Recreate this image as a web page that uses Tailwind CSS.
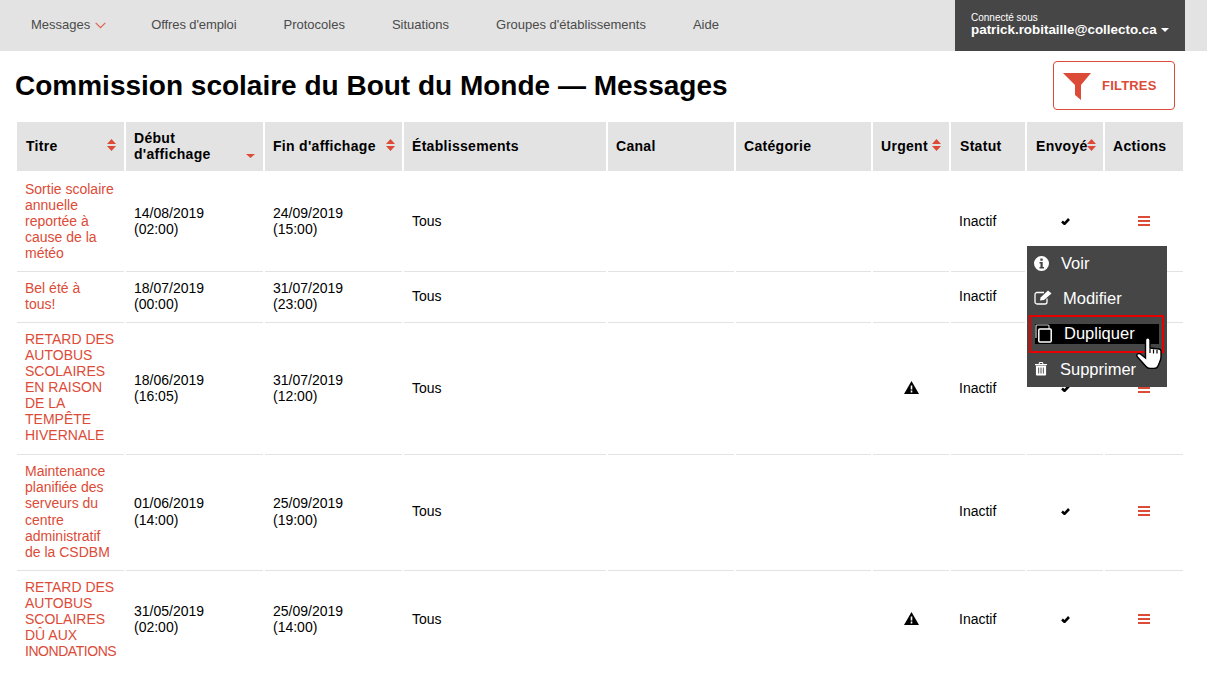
<!DOCTYPE html>
<html lang="fr">

<head>
  <meta charset="UTF-8">
  <meta name="viewport" content="width=device-width, initial-scale=1.0">
  <script src="https://cdn.jsdelivr.net/npm/@tailwindcss/browser@4"></script>
  <title>Messages</title>
</head>

<body class="relative h-[676px] overflow-hidden bg-white font-['Liberation_Sans',Arial,sans-serif] text-[14px] leading-[16.1px] text-black">
  <!-- nav -->
  <div class="flex h-[51px] items-start justify-between bg-[#e3e3e3] pl-[31px] pr-[22px]">
    <div class="flex h-[50px] items-center gap-[47px] text-[13px] text-[#4a4a4a]">
      <a href="#" class="flex items-center gap-[5px]">Messages
        <svg class="h-[7px] w-[11px]" viewBox="0 0 11 7" fill="none"><path d="M.7.9l4.800 4.800L10.300.9" stroke="#e0604f" stroke-width="1.200"/></svg>
      </a>
      <a href="#" class="ml-[-2px] tracking-[-0.1px]">Offres d'emploi</a>
      <a href="#">Protocoles</a>
      <a href="#">Situations</a>
      <a href="#">Groupes d'établissements</a>
      <a href="#">Aide</a>
    </div>
    <div class="flex h-[51px] w-[230px] flex-col justify-center pb-[1px] bg-[#464646] pl-4 text-white">
      <span class="text-[10px] leading-[9px]">Connecté sous</span>
      <span class="flex items-center gap-[4px] text-[13.400px] leading-[15px] font-bold">patrick.robitaille@collecto.ca
        <svg class="h-[4px] w-[8px]" viewBox="0 0 8 4"><path d="M0 0h8L4 4z" fill="#fff"/></svg>
      </span>
    </div>
  </div>

  <!-- title -->
  <div class="flex h-[71px] items-center justify-between pb-[2px] pl-[15px] pr-[32px]">
    <h1 class="text-[28px] leading-[32px] font-bold">Commission scolaire du Bout du Monde — Messages</h1>
    <button class="flex h-[49px] w-[122px] items-center gap-[10px] rounded-[4px] border border-[#dc4b37] pl-[9px] text-[13px] font-bold tracking-[0.2px] text-[#dc4b37]">
      <svg class="mt-[2px] h-[29px] w-[29px]" viewBox="0 0 29 29"><path d="M0 1h28L18 13v15l-6-5V13z" fill="#dc4b37"/></svg>
      <span class="mt-[2px]">FILTRES</span>
    </button>
  </div>

  <!-- table -->
  <table class="ml-[15px] w-[1170px] table-fixed border-separate border-spacing-x-[2px] border-spacing-y-0">
    <colgroup>
      <col class="w-[107px]"><col class="w-[137px]"><col class="w-[137px]"><col class="w-[202px]"><col class="w-[126px]"><col class="w-[135px]"><col class="w-[76px]"><col class="w-[74px]"><col class="w-[76px]"><col class="w-[78px]">
    </colgroup>
    <thead>
      <tr class="h-[49px] bg-[#e3e3e3] text-left text-[14px] tracking-[0.3px]">
        <th class="relative px-[9px] font-bold">Titre
          <svg class="absolute right-[8px] top-[17px] h-[12px] w-[9px]" viewBox="0 0 9 12"><path d="M4.500 0L9 5H0zM0 7h9l-4.500 5z" fill="#dc4b37"/></svg>
        </th>
        <th class="relative px-[8px] pb-[1px] font-bold">Début<br>d'affichage
          <svg class="absolute right-[8px] bottom-[13px] h-[4px] w-[9px]" viewBox="0 0 9 4"><path d="M0 0h9L4.500 4z" fill="#dc4b37"/></svg>
        </th>
        <th class="relative px-[8px] font-bold">Fin d'affichage
          <svg class="absolute right-[7px] top-[17px] h-[12px] w-[9px]" viewBox="0 0 9 12"><path d="M4.500 0L9 5H0zM0 7h9l-4.500 5z" fill="#dc4b37"/></svg>
        </th>
        <th class="px-[8px] font-bold">Établissements</th>
        <th class="px-[8px] font-bold">Canal</th>
        <th class="px-[8px] font-bold">Catégorie</th>
        <th class="relative px-[8px] font-bold">Urgent
          <svg class="absolute right-[8px] top-[17px] h-[12px] w-[9px]" viewBox="0 0 9 12"><path d="M4.500 0L9 5H0zM0 7h9l-4.500 5z" fill="#dc4b37"/></svg>
        </th>
        <th class="px-[9px] font-bold">Statut</th>
        <th class="relative px-[9px] font-bold">Envoyé
          <svg class="absolute right-[7px] top-[17px] h-[12px] w-[9px]" viewBox="0 0 9 12"><path d="M4.500 0L9 5H0zM0 7h9l-4.500 5z" fill="#dc4b37"/></svg>
        </th>
        <th class="px-[8px] font-bold">Actions</th>
      </tr>
    </thead>
    <tbody>
      <tr class="h-[101px] align-middle [&>td]:border-b [&>td]:border-[#e3e3e3] [&>td]:px-[8px]">
        <td class="text-[#dc4b37]">Sortie scolaire annuelle reportée à cause de la météo</td>
        <td>14/08/2019<br>(02:00)</td>
        <td>24/09/2019<br>(15:00)</td>
        <td>Tous</td>
        <td></td>
        <td></td>
        <td></td>
        <td>Inactif</td>
        <td><svg class="mx-auto mt-[1px] h-[7px] w-[9px]" viewBox="0 0 9 7"><path d="M1 3.500l2.500 2.300L8 1" fill="none" stroke="#000" stroke-width="2.600"/></svg></td>
        <td><svg class="mx-auto h-[10px] w-[12px]" viewBox="0 0 12 10"><path d="M0 0h12v2H0zM0 4h12v2H0zM0 8h12v2H0z" fill="#dc4b37"/></svg></td>
      </tr>
      <tr class="h-[51px] align-middle [&>td]:border-b [&>td]:border-[#e3e3e3] [&>td]:px-[8px] [&>td]:pb-[2px]">
        <td class="text-[#dc4b37]">Bel été à<br>tous!</td>
        <td>18/07/2019<br>(00:00)</td>
        <td>31/07/2019<br>(23:00)</td>
        <td>Tous</td>
        <td></td>
        <td></td>
        <td></td>
        <td>Inactif</td>
        <td><svg class="mx-auto mt-[1px] h-[7px] w-[9px]" viewBox="0 0 9 7"><path d="M1 3.500l2.500 2.300L8 1" fill="none" stroke="#000" stroke-width="2.600"/></svg></td>
        <td><svg class="mx-auto h-[10px] w-[12px]" viewBox="0 0 12 10"><path d="M0 0h12v2H0zM0 4h12v2H0zM0 8h12v2H0z" fill="#dc4b37"/></svg></td>
      </tr>
      <tr class="h-[132px] align-middle [&>td]:border-b [&>td]:border-[#e3e3e3] [&>td]:px-[8px] [&>td]:pb-[1px]">
        <td class="pb-[3px]! text-[#dc4b37]">RETARD DES AUTOBUS SCOLAIRES EN RAISON DE LA TEMPÊTE HIVERNALE</td>
        <td>18/06/2019<br>(16:05)</td>
        <td>31/07/2019<br>(12:00)</td>
        <td>Tous</td>
        <td></td>
        <td></td>
        <td><svg class="mx-auto -mt-[1px] h-[13px] w-[15px]" viewBox="0 0 15 13"><path fill-rule="evenodd" d="M7.500 0L15 13H0zM6.700 4.500h1.600v4H6.700zM6.700 9.500h1.600v2H6.700z" fill="#000"/></svg></td>
        <td>Inactif</td>
        <td><svg class="mx-auto mt-[1px] h-[7px] w-[9px]" viewBox="0 0 9 7"><path d="M1 3.500l2.500 2.300L8 1" fill="none" stroke="#000" stroke-width="2.600"/></svg></td>
        <td><svg class="mx-auto h-[10px] w-[12px]" viewBox="0 0 12 10"><path d="M0 0h12v2H0zM0 4h12v2H0zM0 8h12v2H0z" fill="#dc4b37"/></svg></td>
      </tr>
      <tr class="h-[116px] align-middle [&>td]:border-b [&>td]:border-[#e3e3e3] [&>td]:px-[8px] [&>td]:pb-[2px]">
        <td class="text-[#dc4b37]">Maintenance planifiée des serveurs du centre administratif de la CSDBM</td>
        <td>01/06/2019<br>(14:00)</td>
        <td>25/09/2019<br>(19:00)</td>
        <td>Tous</td>
        <td></td>
        <td></td>
        <td></td>
        <td>Inactif</td>
        <td><svg class="mx-auto h-[7px] w-[9px]" viewBox="0 0 9 7"><path d="M1 3.500l2.500 2.300L8 1" fill="none" stroke="#000" stroke-width="2.600"/></svg></td>
        <td><svg class="mx-auto -mt-[1px] h-[10px] w-[12px]" viewBox="0 0 12 10"><path d="M0 0h12v2H0zM0 4h12v2H0zM0 8h12v2H0z" fill="#dc4b37"/></svg></td>
      </tr>
      <tr class="h-[98px] align-middle [&>td]:px-[8px] [&>td]:pb-[2px]">
        <td class="text-[#dc4b37]">RETARD DES AUTOBUS SCOLAIRES DÛ AUX <span class="tracking-[-0.450px]">INONDATIONS</span></td>
        <td>31/05/2019<br>(02:00)</td>
        <td>25/09/2019<br>(14:00)</td>
        <td>Tous</td>
        <td></td>
        <td></td>
        <td><svg class="mx-auto -mt-[1px] h-[13px] w-[15px]" viewBox="0 0 15 13"><path fill-rule="evenodd" d="M7.500 0L15 13H0zM6.700 4.500h1.600v4H6.700zM6.700 9.500h1.600v2H6.700z" fill="#000"/></svg></td>
        <td>Inactif</td>
        <td><svg class="mx-auto mt-[1px] h-[7px] w-[9px]" viewBox="0 0 9 7"><path d="M1 3.500l2.500 2.300L8 1" fill="none" stroke="#000" stroke-width="2.600"/></svg></td>
        <td><svg class="mx-auto h-[10px] w-[12px]" viewBox="0 0 12 10"><path d="M0 0h12v2H0zM0 4h12v2H0zM0 8h12v2H0z" fill="#dc4b37"/></svg></td>
      </tr>
    </tbody>
  </table>

  <!-- actions menu -->
  <div class="absolute left-[1027px] top-[246px] flex h-[141px] w-[140px] flex-col bg-[#464646] pl-[7px] text-[16.500px] leading-[18px] text-white">
    <a href="#" class="flex h-[34px] items-center gap-[12px]">
      <svg class="h-[15px] w-[15px]" viewBox="0 0 15 15"><path fill-rule="evenodd" d="M7.500 0a7.500 7.500 0 1 0 0 15 7.500 7.500 0 0 0 0-15zM6.300 2.500h2.400v2.200H6.300zM5.500 6h3.200v5H10v1.500H5.500V11h1V7.500h-1z" fill="#fff"/></svg>
      Voir
    </a>
    <a href="#" class="flex h-[35px] items-center gap-[11px]">
      <svg class="h-[15px] w-[18px]" viewBox="0 0 18 15" fill="none"><path d="M13 8.500V12a2 2 0 0 1-2 2H3a2 2 0 0 1-2-2V4.500a2 2 0 0 1 2-2h7" stroke="#fff" stroke-width="1.300"/><path d="M6 10.500l.6-3L14 .5l3.500 3L10 10z" fill="#fff"/></svg>
      Modifier
    </a>
    <a href="#" class="relative flex h-[36px] items-center gap-[12px] pl-[1px]">
      <span class="absolute left-[1px] top-[9px] h-[20px] w-[124px] bg-black"></span>
      <svg class="relative h-[19px] w-[17px]" viewBox="0 0 17 19" fill="none"><path d="M1 14V2a1 1 0 0 1 1-1h11a1 1 0 0 1 1 1v3" stroke="#c8c8c8" stroke-width="1.200"/><rect x="3.800" y="5" width="12.400" height="13" rx="1" stroke="#fff" stroke-width="1.500"/></svg>
      <span class="relative">Dupliquer</span>
    </a>
    <a href="#" class="flex h-[35px] items-center gap-[13px]">
      <svg class="ml-[1px] h-[15px] w-[12px]" viewBox="0 0 13 15"><path fill-rule="evenodd" d="M4 2Q4 .5 5.500 .5h2Q9 .5 9 2v.5h4V4H0V2.500h4zM5.200 1.500h2.600v1H5.200zM1 4.500h11V14a1 1 0 0 1-1 1H2a1 1 0 0 1-1-1zM3.500 6.500v6.500h1V6.500zM6 6.500v6.500h1V6.500zM8.500 6.500v6.500h1V6.500z" fill="#fff"/></svg>
      Supprimer
    </a>
  </div>

  <!-- red annotation -->
  <div class="absolute left-[1029px] top-[315px] h-[38px] w-[135px] border-2 border-[#e60000]"></div>

  <!-- hand cursor -->
  <svg class="absolute left-[1136px] top-[336px] h-[33px] w-[27px]" viewBox="0 0 27 33"><path d="M9.500 4a2.250 2.250 0 0 1 4.500 0v8l9 1c1.500.2 2 1 2 2v6c0 2-.5 3.500-1.500 5.500L22 30c-.5 1.500-2 2.500-4 2.500h-4c-2 0-3-.7-4-2L1.500 21c-1-1-.8-2.500 0-3s2-.8 3 0l5 4z" fill="#fff" stroke="#000" stroke-width="1.400"/><path d="M14 13v4M17.500 13.500v4M21 14v3.500" stroke="#000" stroke-width="1.200"/></svg>
</body>

</html>
